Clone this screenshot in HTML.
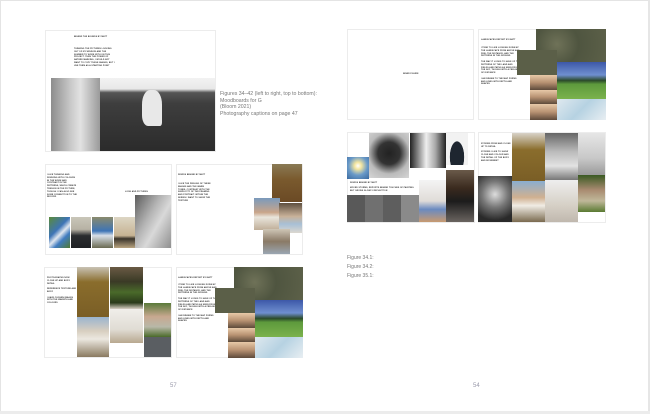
<!DOCTYPE html>
<html><head><meta charset="utf-8"><style>
*{margin:0;padding:0;box-sizing:border-box}
body{width:650px;height:414px;background:#fff;position:relative;overflow:hidden;font-family:"Liberation Sans",sans-serif}
div{position:absolute}
.p{background:#fff;border:1px solid #ececec}
.t{font-size:2px;line-height:2.8px;color:#333;font-weight:bold;letter-spacing:.1px}
.cap{font-size:5.2px;line-height:6.5px;color:#777}
.ae{background:radial-gradient(circle at 30% 40%,#6f7258 0,#4f5540 40%,#5d6149 100%)}
.sky{background:linear-gradient(#3d58a8 0,#6f8fd0 35%,#2b4a2a 50%,#5d9a3c 60%,#7bb24d 100%)}
.map{background:linear-gradient(135deg,#dfe9ef,#b6d2e2,#e8eef2)}
.tr{background:linear-gradient(#e7c9a8 0,#b89272 50%,#5d4a3a 100%)}
</style></head><body>
<div style="left:0;top:0;width:650px;height:1px;background:#e4e4e4"></div>
<div style="left:0;top:0;width:1px;height:414px;background:#e4e4e4"></div>
<div style="left:648px;top:0;width:2px;height:414px;background:#e6e6e6"></div>
<div style="left:0;top:411px;width:650px;height:3px;background:#ececec"></div>

<div class="p" style="left:45px;top:30px;width:171px;height:122px"></div>
<div class="t" style="left:74px;top:36px">BEHIND THE BOUNDS BY MATT</div>
<div class="t" style="left:74px;top:48px;width:42px">THINKING THE PICTURES LOOKING OUT OF MY WINDOW AND THE SUMMER TO WORK WITH ON THIS PROJECT. THEN THE POWER OF NATURE MARKING, I WOULD NOT WANT TO COPY THESE IMAGES, BUT I USE THEM AS A STARTING POINT</div>
<div style="left:51px;top:78px;width:49px;height:73px;background:linear-gradient(90deg,#8c8c8c,#c9c9c9 40%,#e2e2e2 60%,#9a9a9a)"></div>
<div style="left:100px;top:78px;width:115px;height:73px;background:linear-gradient(#f2f2f2 0,#e8e8e8 15%,#555 20%,#3e3e3e 35%,#2b2b2b 100%)"></div>
<div style="left:142px;top:90px;width:20px;height:36px;background:#e8e8e8;border-radius:40% 40% 10% 30%"></div>
<div class="cap" style="left:220px;top:91px">Figures 34–42 (left to right, top to bottom):<br>Moodboards for G<br>(Bloom 2021)<br>Photography captions on page 47</div>

<div class="p" style="left:45px;top:164px;width:127px;height:91px"></div>
<div class="t" style="left:47px;top:174px;width:30px">I LIKE THINKING AND WORKING WITH COLOURS IN THE WORK AND CONTRAST IN THE PATTERNS, WHICH CREATE TENSION IN THE PICTURE, THOUGH I CAN ALSO SEE SOME CONNECTION TO THE RECORD</div>
<div class="t" style="left:125px;top:191px">LOOK AND PICTURES</div>
<div style="left:49px;top:217px;width:21px;height:31px;background:linear-gradient(135deg,#5a8a3a,#3d74b6 40%,#dfe6ee 55%,#3f7bc0 70%,#4f7a32)"></div>
<div style="left:71px;top:217px;width:20px;height:31px;background:linear-gradient(#c9c6b9 0,#b7b2a4 40%,#2a2c2f 60%,#1f2124)"></div>
<div style="left:92px;top:217px;width:21px;height:31px;background:linear-gradient(#8a8a6c,#3d74b6 45%,#d8dfe8 60%,#6a6a52)"></div>
<div style="left:114px;top:217px;width:21px;height:31px;background:linear-gradient(#ddd6c4,#c6b393 60%,#3a342b 70%,#b9a480)"></div>
<div style="left:135px;top:195px;width:36px;height:53px;background:linear-gradient(120deg,#5c5c5c,#b5b5b5 40%,#d9d9d9 60%,#8f8f8f)"></div>

<div class="p" style="left:176px;top:164px;width:127px;height:91px"></div>
<div class="t" style="left:178px;top:174px">WORDS BEHIND BY MATT</div>
<div class="t" style="left:178px;top:183px;width:34px">I LIKE THE FEELING OF THESE IMAGES AND THE WARM TONES, CONTRAST WITH THE SIMPLICITY OF THE FRAMING AND PORTRAIT. WITHIN THE SERIES I WANT TO SHOW THE TEXTURE</div>
<div style="left:272px;top:164px;width:30px;height:38px;background:linear-gradient(#8a7a55,#7a5a2e 40%,#6b4a25)"></div>
<div style="left:254px;top:198px;width:26px;height:32px;background:linear-gradient(#7a9abc 0,#c9a58a 45%,#e9e5dc 60%,#bfae98)"></div>
<div style="left:279px;top:203px;width:23px;height:30px;background:linear-gradient(#5f5040,#c9b29a 45%,#a8c0d6 70%,#dcd8d0)"></div>
<div style="left:263px;top:229px;width:27px;height:25px;background:linear-gradient(#cfc6b6,#8a7a66 50%,#9aa6b2)"></div>

<div class="p" style="left:44px;top:267px;width:128px;height:91px"></div>
<div class="t" style="left:47px;top:277px;width:30px">PHOTOGRAPHS NOW CLOSE UP AND BODY DETAIL<br><br>REFERENCE TEXTURE AND BODY<br><br>I HAVE CHOSEN IMAGES WITH THE WARMTH AND COLOURS</div>
<div style="left:77px;top:267px;width:32px;height:50px;background:linear-gradient(#c8c2b4 0,#8a6d2c 30%,#7a5e26 100%)"></div>
<div style="left:110px;top:267px;width:33px;height:42px;background:linear-gradient(#6a5a44 0,#3a3a26 35%,#4a6a2a 60%,#2a3a1a 85%,#d8cfc4)"></div>
<div style="left:77px;top:317px;width:32px;height:40px;background:linear-gradient(#9ab4cf 0,#d8cfc0 35%,#ece8e0 55%,#8a7a60)"></div>
<div style="left:110px;top:309px;width:33px;height:34px;background:linear-gradient(#f0eeea,#e0dcd4 60%,#b8a890)"></div>
<div style="left:144px;top:303px;width:27px;height:34px;background:linear-gradient(#5a7a3a,#c8a890 40%,#b8b8a8 70%,#4a6a2a)"></div>
<div style="left:144px;top:337px;width:27px;height:20px;background:#5a5e62"></div>

<div class="p" style="left:176px;top:267px;width:127px;height:91px"></div>
<div class="t" style="left:178px;top:277px">LANDSCAPES REPORT BY MATT</div>
<div class="t" style="left:178px;top:284px;width:40px">I TEND TO LIKE LOOKING DOWN AT THE LANDSCAPE FROM ABOVE AND FEEL THE DISTANCE, AND THE PATTERNS IN THE GROUND.<br><br>THE WAY IT LOOKS TO HAVE OF THE PATTERNS OF THE LAND AND FIELDS AND PATHS AS SEEN FROM THE SKY, THOUGH WITH A FEELING OF DISTANCE<br><br>I AM DRAWN TO THE MAP FORMS AND LINES WITH DEPTH AND SHAPES</div>
<div class="ae" style="left:234px;top:267px;width:69px;height:38px"></div>
<div class="ae" style="left:215px;top:288px;width:40px;height:25px;background:#5b5f48"></div>
<div class="sky" style="left:255px;top:300px;width:48px;height:37px"></div>
<div class="map" style="left:255px;top:337px;width:48px;height:21px"></div>
<div class="tr" style="left:228px;top:313px;width:27px;height:15px"></div>
<div class="tr" style="left:228px;top:328px;width:27px;height:14px"></div>
<div class="tr" style="left:228px;top:342px;width:27px;height:16px"></div>

<div style="left:170px;top:383px;font-size:6px;color:#99a;">57</div>

<div class="p" style="left:347px;top:29px;width:127px;height:91px"></div>
<div class="t" style="left:403px;top:73px">INNER FIGURE</div>

<div class="p" style="left:478px;top:29px;width:128px;height:91px"></div>
<div class="t" style="left:481px;top:39px">LANDSCAPES REPORT BY MATT</div>
<div class="t" style="left:481px;top:47px;width:40px">I TEND TO LIKE LOOKING DOWN AT THE LANDSCAPE FROM ABOVE AND FEEL THE DISTANCE, AND THE PATTERNS IN THE GROUND.<br><br>THE WAY IT LOOKS TO HAVE OF THE PATTERNS OF THE LAND AND FIELDS AND PATHS AS SEEN FROM THE SKY, THOUGH WITH A FEELING OF DISTANCE<br><br>I AM DRAWN TO THE MAP FORMS AND LINES WITH DEPTH AND SHAPES</div>
<div class="ae" style="left:536px;top:29px;width:70px;height:38px"></div>
<div class="ae" style="left:517px;top:50px;width:40px;height:25px;background:#5b5f48"></div>
<div class="sky" style="left:557px;top:62px;width:49px;height:37px"></div>
<div class="map" style="left:557px;top:99px;width:49px;height:21px"></div>
<div class="tr" style="left:530px;top:75px;width:27px;height:15px"></div>
<div class="tr" style="left:530px;top:90px;width:27px;height:14px"></div>
<div class="tr" style="left:530px;top:104px;width:27px;height:16px"></div>

<div class="p" style="left:347px;top:132px;width:128px;height:91px"></div>
<div style="left:347px;top:157px;width:22px;height:22px;background:radial-gradient(circle at 50% 40%,#fff 0,#f4e6a0 20%,#6a9ac8 55%,#3a6aa0)"></div>
<div style="left:369px;top:133px;width:40px;height:45px;background:radial-gradient(circle at 50% 45%,#222 0,#333 35%,#bbb 65%,#d6d6d6)"></div>
<div style="left:410px;top:133px;width:36px;height:35px;background:linear-gradient(90deg,#222,#eee 45%,#aaa 70%,#222)"></div>
<div style="left:446px;top:133px;width:22px;height:32px;background:radial-gradient(ellipse at 50% 75%,#1e2630 0,#1e2630 45%,#f2f2f2 47%)"></div>
<div style="left:446px;top:170px;width:28px;height:52px;background:linear-gradient(#6a5a4a,#3a2a1e 35%,#1c1c1c 60%,#6a6460)"></div>
<div style="left:419px;top:180px;width:27px;height:42px;background:linear-gradient(#f4f4f4 0,#e0dcd8 50%,#6a8ac0 70%,#c89a70)"></div>
<div class="t" style="left:350px;top:182px">WORDS BEHIND BY MATT</div>
<div class="t" style="left:350px;top:187px;width:68px">MOVED STORMS, REPORTS BEHIND TOUCHES OF PAINTING BUT GROWS SLOWLY REFLECTION</div>
<div style="left:347px;top:195px;width:18px;height:27px;background:#595959"></div>
<div style="left:365px;top:195px;width:18px;height:27px;background:#707070"></div>
<div style="left:383px;top:195px;width:18px;height:27px;background:#5e5e5e"></div>
<div style="left:401px;top:195px;width:18px;height:27px;background:#8a8a8a"></div>

<div class="p" style="left:478px;top:132px;width:128px;height:91px"></div>
<div class="t" style="left:481px;top:143px;width:30px">STORIES FROM AND CLOSE UP TO DETAIL<br><br>STORIES I LIKE TO SHOW CLOSE AND COLOUR AND THE DETAIL OF THE BODY AND MOVEMENT</div>
<div style="left:512px;top:133px;width:33px;height:48px;background:linear-gradient(#d8d2c8,#8a6d2c 35%,#7a5e26)"></div>
<div style="left:545px;top:133px;width:33px;height:47px;background:linear-gradient(#666,#bbb 40%,#e2e2e2 70%,#777)"></div>
<div style="left:578px;top:133px;width:27px;height:42px;background:linear-gradient(#e6e6e6,#c8c8c8 60%,#9a9a9a)"></div>
<div style="left:478px;top:176px;width:34px;height:46px;background:radial-gradient(circle at 50% 40%,#ddd 0,#777 40%,#2a2a2a 80%)"></div>
<div style="left:512px;top:181px;width:33px;height:41px;background:linear-gradient(#8aaed0,#d0b090 40%,#f0ece4 60%,#7a6a50)"></div>
<div style="left:545px;top:180px;width:33px;height:42px;background:linear-gradient(#eee,#d6d0c6 60%,#c0b8ae)"></div>
<div style="left:578px;top:175px;width:27px;height:37px;background:linear-gradient(#3a5a22,#a88a70 40%,#c0b89a 70%,#5a7a32)"></div>

<div class="cap" style="left:347px;top:254px;line-height:9px;font-size:5px">Figure 34.1:<br>Figure 34.2:<br>Figure 35.1:</div>
<div style="left:473px;top:383px;font-size:6px;color:#99a;">54</div>
</body></html>
